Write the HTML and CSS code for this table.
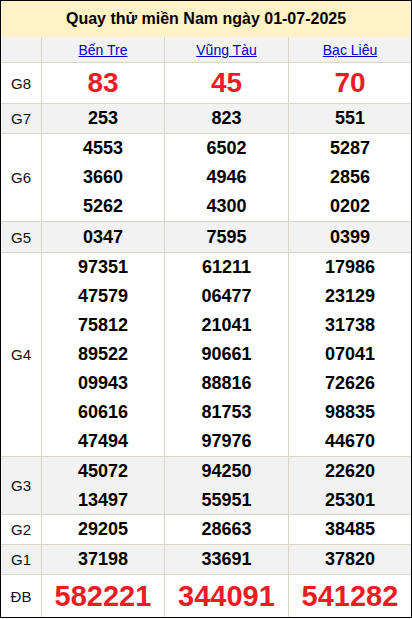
FILE: index.html
```html
<!DOCTYPE html>
<html lang="vi">
<head>
<meta charset="utf-8">
<title>Quay thử miền Nam</title>
<link rel="stylesheet" href="styles.css">
</head>
<body>
<table class="kq">
  <colgroup>
    <col class="c-label">
    <col class="c-a">
    <col class="c-b">
    <col class="c-c">
  </colgroup>
  <tr>
    <th class="title" colspan="4">Quay thử miền Nam ngày 01-07-2025</th>
  </tr>
  <tr class="prov alt">
    <td class="label"></td>
    <td><a href="#">Bến Tre</a></td>
    <td><a href="#">Vũng Tàu</a></td>
    <td class="last"><a href="#">Bạc Liêu</a></td>
  </tr>
  <tr class="g8">
    <td class="label">G8</td>
    <td><div class="n big">83</div></td>
    <td><div class="n big">45</div></td>
    <td class="last"><div class="n big">70</div></td>
  </tr>
  <tr class="alt">
    <td class="label">G7</td>
    <td><div class="n">253</div></td>
    <td><div class="n">823</div></td>
    <td class="last"><div class="n">551</div></td>
  </tr>
  <tr>
    <td class="label">G6</td>
    <td><div class="n">4553</div><div class="n">3660</div><div class="n">5262</div></td>
    <td><div class="n">6502</div><div class="n">4946</div><div class="n">4300</div></td>
    <td class="last"><div class="n">5287</div><div class="n">2856</div><div class="n">0202</div></td>
  </tr>
  <tr class="alt g5">
    <td class="label">G5</td>
    <td><div class="n">0347</div></td>
    <td><div class="n">7595</div></td>
    <td class="last"><div class="n">0399</div></td>
  </tr>
  <tr>
    <td class="label">G4</td>
    <td><div class="n">97351</div><div class="n">47579</div><div class="n">75812</div><div class="n">89522</div><div class="n">09943</div><div class="n">60616</div><div class="n">47494</div></td>
    <td><div class="n">61211</div><div class="n">06477</div><div class="n">21041</div><div class="n">90661</div><div class="n">88816</div><div class="n">81753</div><div class="n">97976</div></td>
    <td class="last"><div class="n">17986</div><div class="n">23129</div><div class="n">31738</div><div class="n">07041</div><div class="n">72626</div><div class="n">98835</div><div class="n">44670</div></td>
  </tr>
  <tr class="alt g3">
    <td class="label">G3</td>
    <td><div class="n">45072</div><div class="n">13497</div></td>
    <td><div class="n">94250</div><div class="n">55951</div></td>
    <td class="last"><div class="n">22620</div><div class="n">25301</div></td>
  </tr>
  <tr>
    <td class="label">G2</td>
    <td><div class="n">29205</div></td>
    <td><div class="n">28663</div></td>
    <td class="last"><div class="n">38485</div></td>
  </tr>
  <tr class="alt">
    <td class="label">G1</td>
    <td><div class="n">37198</div></td>
    <td><div class="n">33691</div></td>
    <td class="last"><div class="n">37820</div></td>
  </tr>
  <tr class="db lastrow">
    <td class="label">ĐB</td>
    <td><div class="n huge">582221</div></td>
    <td><div class="n huge">344091</div></td>
    <td class="last"><div class="n huge">541282</div></td>
  </tr>
</table>
</body>
</html>
```
FILE: styles.css
```css
html, body {
  margin: 0;
  padding: 0;
  background: #fff;
}
body {
  font-family: "Liberation Sans", Arial, sans-serif;
  color: #000;
}
.kq {
  width: 412px;
  table-layout: fixed;
  border-collapse: separate;
  border-spacing: 0;
  border: 1px solid #000;
}
.c-label { width: 41px; }
.c-a { width: 123px; }
.c-b { width: 124px; }
.c-c { width: 122px; }

.kq td {
  padding: 0;
  text-align: center;
  vertical-align: middle;
  border-right: 1px solid #dcd5ce;
  border-bottom: 1px solid #dcd5ce;
}
.kq td.last { border-right: 0; }
.kq tr.lastrow td { border-bottom: 0; }

.title {
  height: 36px;
  padding: 0;
  background: #fff2c4;
  font-size: 16px;
  font-weight: bold;
  text-align: center;
  vertical-align: middle;
}
.alt td { background: #f2f2f2; }

.prov td { height: 25px; }
.prov a {
  color: #0000cc;
  font-size: 14px;
  text-decoration: underline;
}
.kq td.label {
  font-size: 15px;
  color: #111;
}
.n {
  font-size: 18px;
  font-weight: bold;
  line-height: 29px;
}
.g5 .n { line-height: 30px; }
.g3 .n { line-height: 28.5px; }
.n.big {
  font-size: 28px;
  line-height: 40px;
  color: #ed1c24;
}
.n.huge {
  font-size: 29px;
  line-height: 42px;
  color: #ed1c24;
}
```
